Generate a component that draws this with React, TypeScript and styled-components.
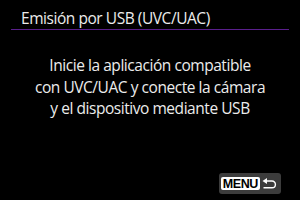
import React from 'react'
import styled, { createGlobalStyle } from 'styled-components'

const GlobalStyle = createGlobalStyle`
  html, body {
    margin: 0;
    padding: 0;
    background: #000;
  }
`

const Screen = styled.div`
  width: 300px;
  height: 200px;
  background: #000;
  display: flex;
  flex-direction: column;
  font-family: 'Open Sans', 'Noto Sans', sans-serif;
  color: #ececec;
  overflow: hidden;
`

const Header = styled.div`
  margin: 0 11px;
  padding: 8px 0 0 10px;
  height: 21px;
  border-bottom: 1.5px solid #5a1f8c;
`

const Title = styled.h1`
  margin: 0;
  font-size: 15.5px;
  font-weight: 400;
  letter-spacing: -0.45px;
  line-height: 20px;
  white-space: nowrap;
`

const Message = styled.p`
  margin: 0;
  padding-top: 25px;
  text-align: center;
  font-size: 15.5px;
  letter-spacing: -0.45px;
  line-height: 21.5px;
`

const Footer = styled.div`
  margin-top: auto;
  display: flex;
  justify-content: flex-end;
  padding: 0 19px 6px 0;
`

const MenuButton = styled.div`
  display: flex;
  align-items: center;
  gap: 2px;
  height: 21px;
  padding: 0 4px 0 2px;
  background: #3c3c3c;
  border-radius: 3px;
`

const MenuLabel = styled.span`
  display: flex;
  align-items: center;
  height: 13px;
  padding: 0 2px;
  background: #fff;
  border-radius: 2px;
  color: #000;
  font-family: 'Liberation Sans', Arial, sans-serif;
  font-weight: 700;
  font-size: 12.5px;
  letter-spacing: -0.4px;
`

const ReturnIcon = () => (
  <svg width="15" height="12" viewBox="0 0 15 12">
    <path
      d="M4 3 H10 A3.4 3.4 0 0 1 10 9.8 H1.5"
      fill="none"
      stroke="#fff"
      strokeWidth="1.4"
    />
    <path d="M0.5 3 L5 0 L5 6 Z" fill="#fff" />
  </svg>
)

export default function App() {
  return (
    <Screen>
      <GlobalStyle />
      <Header>
        <Title>Emisión por USB (UVC/UAC)</Title>
      </Header>
      <Message>
        Inicie la aplicación compatible
        <br />
        con UVC/UAC y conecte la cámara
        <br />
        y el dispositivo mediante USB
      </Message>
      <Footer>
        <MenuButton>
          <MenuLabel>MENU</MenuLabel>
          <ReturnIcon />
        </MenuButton>
      </Footer>
    </Screen>
  )
}
